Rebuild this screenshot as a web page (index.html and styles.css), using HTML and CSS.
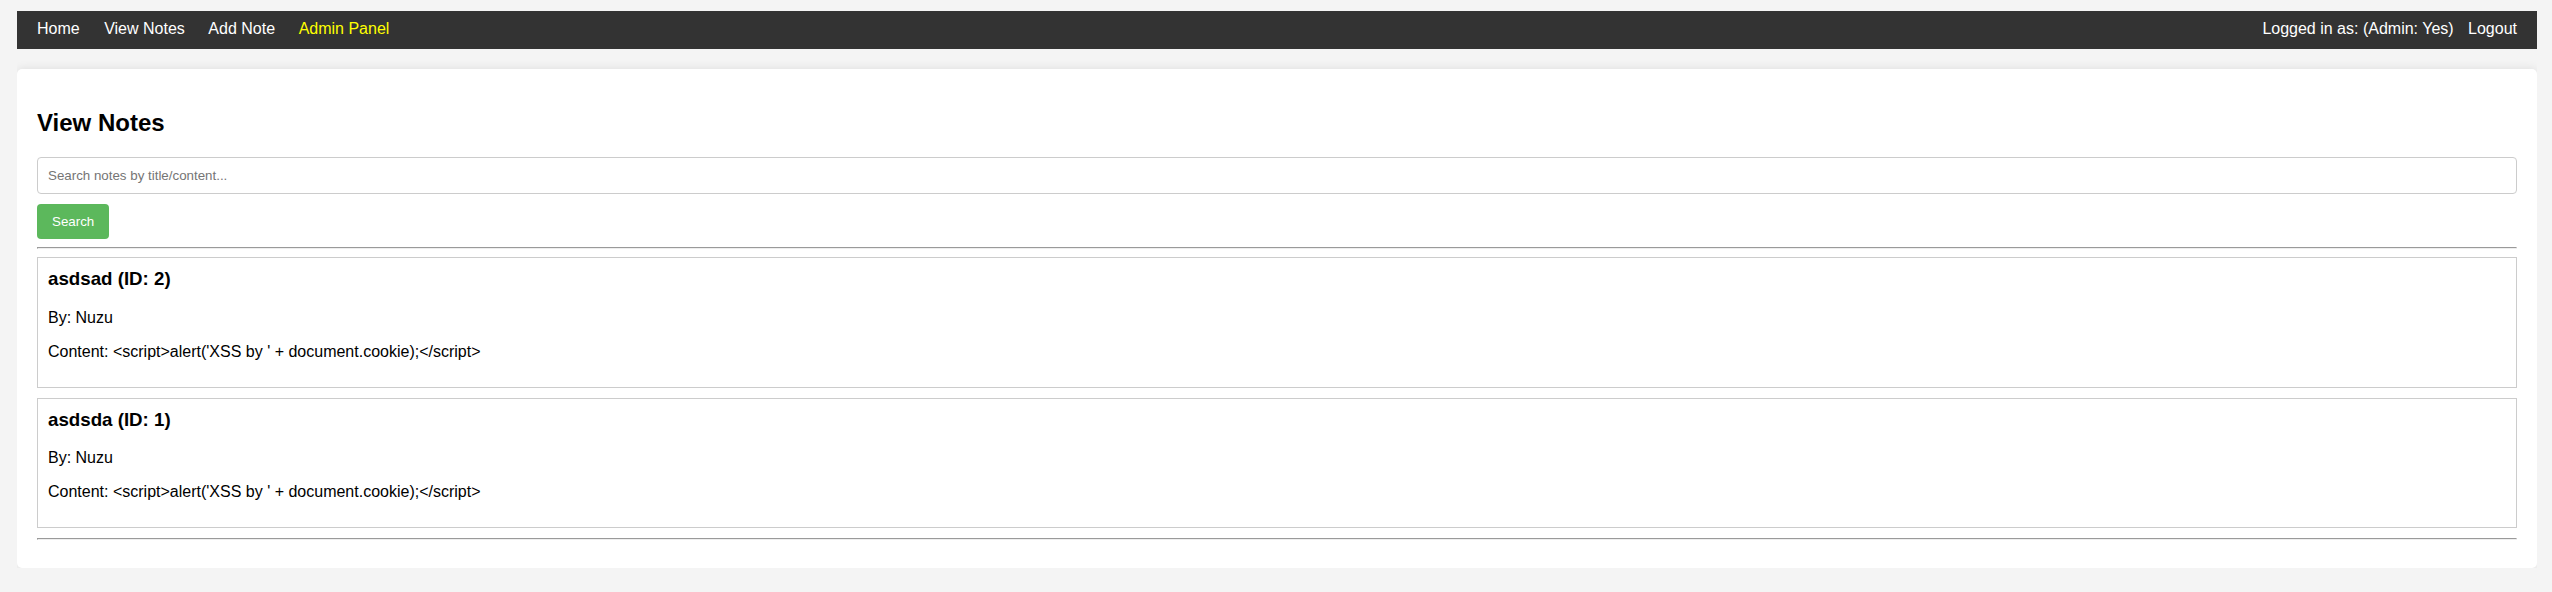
FILE: index.html
```html
<!DOCTYPE html>
<html lang="en">
<head>
<meta charset="utf-8">
<title>View Notes</title>
<link rel="stylesheet" href="styles.css">
</head>
<body>
<nav class="topnav">
  <div class="nav-left">
    <a href="#" class="nav-link">Home</a>
    <a href="#" class="nav-link">View Notes</a>
    <a href="#" class="nav-link">Add Note</a>
    <a href="#" class="nav-link nav-admin">Admin Panel</a>
  </div>
  <div class="nav-right">
    <span class="nav-user">Logged in as: (Admin: Yes)</span>
    <a href="#" class="nav-link nav-logout">Logout</a>
  </div>
</nav>
<main class="container">
  <h2 class="page-title">View Notes</h2>
  <form class="search-form">
    <input type="text" class="search-input" placeholder="Search notes by title/content...">
    <button type="button" class="search-btn">Search</button>
  </form>
  <hr class="divider">
  <div class="note">
    <h3 class="note-title">asdsad (ID: 2)</h3>
    <p class="note-line">By: Nuzu</p>
    <p class="note-line">Content: &lt;script&gt;alert('XSS by ' + document.cookie);&lt;/script&gt;</p>
  </div>
  <div class="note">
    <h3 class="note-title">asdsda (ID: 1)</h3>
    <p class="note-line">By: Nuzu</p>
    <p class="note-line">Content: &lt;script&gt;alert('XSS by ' + document.cookie);&lt;/script&gt;</p>
  </div>
  <hr class="divider">
</main>
</body>
</html>
```

FILE: styles.css
```css
html {
  background: #f4f4f4;
}

body {
  margin: 11px 15px 24px 17px;
  font-family: "Liberation Sans", Arial, sans-serif;
  font-size: 16px;
  color: #000;
  background: #f4f4f4;
}

.topnav {
  display: flex;
  justify-content: space-between;
  align-items: center;
  background: #333;
  color: #fff;
  padding: 9px 20px 11px 20px;
}

.nav-link {
  color: #fff;
  text-decoration: none;
  margin-right: 20px;
}

.nav-admin {
  color: #ffff00;
}

.nav-logout {
  margin-right: 0;
}

.nav-user {
  margin-right: 10px;
}

.container {
  margin-top: 20px;
  background: #fff;
  padding: 20px;
  border-radius: 5px;
  box-shadow: 0 0 10px rgba(0, 0, 0, 0.1);
}

.page-title {
  font-size: 24px;
  font-weight: bold;
  margin: 0.83em 0;
}

.search-form {
  display: flex;
  flex-direction: column;
  align-items: flex-start;
  margin: 0;
}

.search-input {
  display: block;
  width: 100%;
  box-sizing: border-box;
  padding: 10px;
  margin: 0 0 10px 0;
  border: 1px solid #ccc;
  border-radius: 4px;
  font-family: "Liberation Sans", Arial, sans-serif;
  font-size: 13.333px;
  color: #000;
}

.search-input::placeholder {
  color: #757575;
}

.search-btn {
  padding: 10px 15px;
  border: none;
  border-radius: 4px;
  background: #5cb85c;
  color: #fff;
  font-family: "Liberation Sans", Arial, sans-serif;
  font-size: 13.333px;
  cursor: pointer;
}

.divider {
  margin: 8px 0;
}

.note {
  border: 1px solid #ccc;
  padding: 10px;
  margin-bottom: 10px;
}

.note-title {
  font-size: 18.72px;
  font-weight: bold;
  margin: 0 0 18.72px 0;
}

.note-line {
  margin: 16px 0;
}
```
